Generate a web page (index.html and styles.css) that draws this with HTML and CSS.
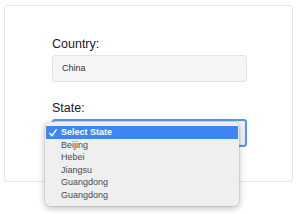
FILE: index.html
```html
<!DOCTYPE html>
<html lang="en">
<head>
    <meta charset="UTF-8">
    <title>Country / State</title>
    <link rel="stylesheet" href="styles.css">
</head>
<body>
    <div class="card">
        <div class="field">
            <label class="label">Country:</label>
            <div class="input">China</div>
        </div>
        <div class="field">
            <label class="label">State:</label>
            <div class="select-wrap">
                <div class="select"></div>
                <ul class="menu">
                    <li class="opt active">
                        <svg class="check" width="8" height="8" viewBox="0 0 8 8"><polyline points="0.8,4.3 2.9,6.8 7.2,0.8" fill="none" stroke="#fff" stroke-width="1.4" stroke-linecap="round" stroke-linejoin="round"/></svg>Select State
                    </li>
                    <li class="opt">Beijing</li>
                    <li class="opt">Hebei</li>
                    <li class="opt">Jiangsu</li>
                    <li class="opt">Guangdong</li>
                    <li class="opt">Guangdong</li>
                </ul>
            </div>
        </div>
    </div>
</body>
</html>
```

FILE: styles.css
```css
html, body {
    margin: 0;
    padding: 0;
    background: #fff;
}
html {
    min-height: 214px;
}
body {
    min-height: 214px;
    font-family: "Liberation Sans", Arial, sans-serif;
    color: #222;
}
ul, li {
    margin: 0;
    padding: 0;
    list-style: none;
}
.card {
    box-sizing: border-box;
    width: 289px;
    height: 177px;
    margin: 5px 0 0 4px;
    padding: 30px 0 0 47px;
    border: 1px solid #e6e6e6;
    border-radius: 3px;
}
.field {
    margin-bottom: 18px;
}
.label {
    display: block;
    font-size: 12.5px;
    line-height: 16px;
    margin-bottom: 3px;
    color: #1a1a1a;
}
.input {
    box-sizing: border-box;
    width: 195px;
    height: 27px;
    padding: 0 9px;
    background: #f5f5f5;
    border: 1px solid #e3e3e3;
    border-radius: 3px;
    font-size: 9px;
    line-height: 25px;
    color: #333;
}
.select-wrap {
    position: relative;
    height: 28px;
}
.select {
    box-sizing: border-box;
    width: 195px;
    height: 28px;
    background: #f3f3f3;
    border: 2px solid #5b97ec;
    border-radius: 3px;
    box-shadow: inset 0 0 0 1px #dfe6f0;
}
.menu {
    position: absolute;
    z-index: 2;
    left: -7px;
    top: 3px;
    width: 194px;
    padding: 4px 1px 5px;
    box-sizing: border-box;
    background: #efefef;
    border-radius: 5px;
    box-shadow: 0 2px 7px rgba(0, 0, 0, 0.28), 0 0 0 0.5px rgba(0, 0, 0, 0.12);
}
.opt {
    position: relative;
    height: 12.5px;
    line-height: 12.5px;
    padding-left: 15px;
    font-size: 9px;
    color: #4a4a4a;
}
.opt.active {
    background: #3f86f2;
    color: #fff;
    font-weight: bold;
}
.check {
    position: absolute;
    left: 3px;
    top: 2.5px;
}
```
